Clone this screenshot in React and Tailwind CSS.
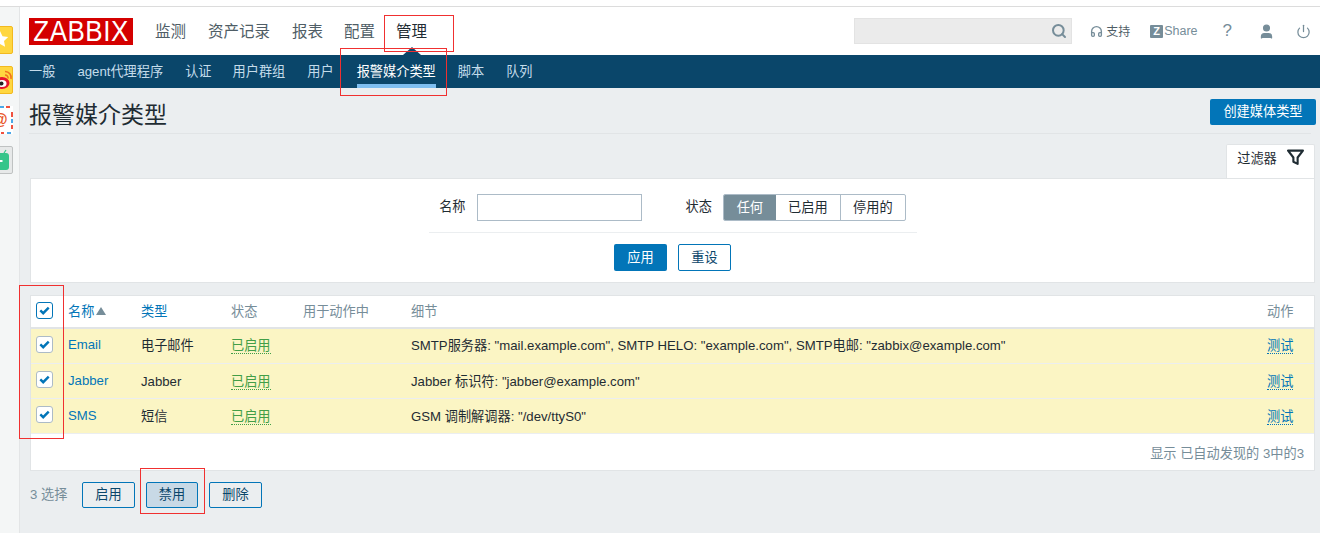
import React from "react";
import { Search, Headphones, User, Power } from "lucide-react";

const font = { fontFamily: '"Liberation Sans", Arial, "Noto Sans CJK SC", sans-serif' };

function Check({ dark }) {
  return (
    <span className={`-mt-[3px] ml-[5px] flex h-[17px] w-[17px] items-center justify-center rounded-[3px] border bg-white ${dark ? "border-[#0275b8]" : "border-[#acbbc7]"}`}>
      <svg width="11" height="9" viewBox="0 0 11 9"><path d="M1.300 4.400 4.200 7.200 9.700 1.600" fill="none" stroke="#0275b8" strokeWidth="2.400" /></svg>
    </span>
  );
}

function Row({ name, type, detail, late }) {
  return (
    <div className="flex h-[35px] items-center border-b border-[#ebeef0] bg-[#fbf5c4] text-[13.2px] text-[#1f2c33]">
      <div className="flex w-[37px]"><Check /></div>
      <div className={`w-[73px] text-[#0275b8] ${late ? "-mt-[1px]" : "-mt-[3px]"}`}>{name}</div>
      <div className={`w-[90px] ${late ? "mt-[1px]" : "-mt-[1px]"}`}>{type}</div>
      <div className={`w-[180px] ${late ? "mt-[2px]" : ""}`}><span className="border-b border-dotted border-[#429e47] text-[#429e47]">已启用</span></div>
      <div className={`flex-1 ${late ? "mt-[1px]" : "-mt-[1px]"}`}>{detail}</div>
      <div className={`w-[47px] ${late ? "mt-[2px]" : ""}`}><span className="border-b border-dotted border-[#0275b8] text-[#0275b8]">测试</span></div>
    </div>
  );
}

function SmallBtn({ children, active, w }) {
  return <button className={`h-[26px] ${w} rounded-[2px] border border-[#0275b8] text-[13.2px] text-[#0a466a] ${active ? "bg-[#c8d9e6]" : "bg-[#ebeef0]"}`}>{children}</button>;
}

function SideIcons() {
  return (
    <div className="flex w-[20px] shrink-0 flex-col border-r border-[#e3e5e6] bg-[#f4f6f6] pt-[19px]">
      <svg width="13" height="28" viewBox="0 0 13 28" className="mb-[12px]" aria-hidden="true">
        <rect x="-3" y="0.500" width="15.500" height="27" rx="1.500" fill="#ffd740" stroke="#f2b91f" />
        <path d="M0 5l2.500 5.300 5.700.7-4.200 4 1.100 5.700L0 18l-5 2.700 1-5.700-4-4 5.600-.7z" fill="#fff" />
      </svg>
      <svg width="13" height="28" viewBox="0 0 13 28" className="mb-[12px]" aria-hidden="true">
        <rect x="-3" y="0.500" width="15.500" height="27" rx="1.500" fill="#ffd740" stroke="#f2b91f" />
        <ellipse cx="2" cy="17" rx="7.500" ry="6" fill="#e6162d" />
        <ellipse cx="2" cy="17.500" rx="4.500" ry="3.500" fill="#fff" />
        <circle cx="1.500" cy="17.500" r="2" fill="#222" />
        <path d="M5 5.500a6 6 0 0 1 6 7.500M5 9a3 3 0 0 1 3 3.500" fill="none" stroke="#f0741f" strokeWidth="1.600" />
      </svg>
      <svg width="13" height="28" viewBox="0 0 13 28" className="mb-[12px]" aria-hidden="true">
        <rect x="0" y="0" width="13" height="28" fill="#fff" />
        <path d="M0 1h4" stroke="#4aa8e8" strokeWidth="2" />
        <path d="M6 1h4M12 6v5M12 19v4M1 27h3" stroke="#f0513f" strokeWidth="2" />
        <path d="M12 13v4M7 27h4" stroke="#4aa8e8" strokeWidth="2" />
        <text x="-8" y="19" fontSize="16" fontWeight="700" fill="#e9572a" fontFamily="Liberation Sans, sans-serif">@</text>
      </svg>
      <svg width="13" height="28" viewBox="0 0 13 28" aria-hidden="true">
        <rect x="-3" y="0.500" width="15.500" height="27" rx="1.500" fill="#e7e9e9" stroke="#bfc2c2" />
        <rect x="-4" y="7" width="13" height="17" rx="3" fill="#35c58a" />
        <path d="M4 7l2-3" stroke="#35c58a" strokeWidth="1.200" />
        <rect x="0" y="14" width="2.500" height="2" fill="#fff" />
      </svg>
    </div>
  );
}

export default function App() {
  return (
    <div style={font} className="relative h-[533px] w-[1320px] overflow-hidden bg-white">
      <div className="h-[7px] border-b border-[#dcdcdc] bg-white" />
      <div className="flex h-[526px]">
        <SideIcons />
        <main className="min-w-0 flex-1 bg-[#ebeef0]">
          <header className="flex h-[48px] items-center bg-white pl-[9px] pr-[9px]">
            <div className="flex h-[27px] w-[104px] items-center justify-center bg-[#d40000] text-[26px] leading-none tracking-[0.5px] text-white">
              <span className="inline-block scale-y-110">ZABBIX</span>
            </div>
            <nav className="ml-[22px] flex items-center pt-[2px] text-[15.500px] text-[#4f5d66]">
              <span className="mr-[22px]">监测</span>
              <span className="mr-[22px]">资产记录</span>
              <span className="mr-[21px]">报表</span>
              <span className="mr-[21px]">配置</span>
              <span className="text-[#1f2c33]">管理</span>
            </nav>
            <div className="ml-auto flex h-[26px] w-[218px] items-center justify-end border border-[#e3e3e3] bg-[#ebebeb] pr-[4px]">
              <Search size={16} strokeWidth={3} className="text-[#768d99]" />
            </div>
            <div className="ml-[18px] flex w-[40px] items-center whitespace-nowrap text-[12px] text-[#4f5d66]">
              <Headphones size={13} strokeWidth={2.500} className="mr-[3px] shrink-0 text-[#768d99]" /><span className="mt-[1px]">支持</span>
            </div>
            <div className="ml-[20px] flex items-center text-[12.500px] text-[#768d99]">
              <span className="mr-[1px] flex h-[13px] w-[13px] items-center justify-center rounded-[1px] bg-[#768d99] text-[11px] font-bold leading-none text-white">Z</span>Share
            </div>
            <span className="ml-[25px] text-[17px] text-[#768d99]">?</span>
            <User size={17} fill="#768d99" strokeWidth={2} className="ml-[26px] text-[#768d99]" />
            <Power size={15} strokeWidth={2} className="ml-[21px] text-[#768d99]" />
          </header>

          <nav className="relative flex h-[33px] items-center bg-[#0a466a] pl-[9px] text-[13.200px] text-[#c4dcea]">
            <span className="mr-[22px]">一般</span>
            <span className="mr-[22px]">agent代理程序</span>
            <span className="mr-[21px]">认证</span>
            <span className="mr-[22px]">用户群组</span>
            <span className="mr-[23px]">用户</span>
            <span className="relative mr-[22px] text-white">报警媒介类型<span className="absolute -bottom-[7px] left-0 h-[4px] w-full bg-[#7ebef0]" /></span>
            <span className="mr-[22px]">脚本</span>
            <span>队列</span>
            <span className="absolute -top-[8px] left-[383px] h-0 w-0 border-x-[9px] border-b-[8px] border-x-transparent border-b-[#0a466a]" />
          </nav>

          <div className="mx-[9px] flex h-[46px] items-start justify-between border-b border-[#e1e4e6]">
            <h1 className="pt-[10px] text-[23px] font-normal text-[#1f2c33]">报警媒介类型</h1>
            <button className="mr-[-5px] mt-[11px] h-[26px] w-[106px] rounded-[2px] bg-[#0275b8] text-[13.200px] text-white">创建媒体类型</button>
          </div>

          <div className="ml-[10px] mr-[5px] mt-[10px] flex justify-end">
            <div className="flex h-[34px] w-[89px] items-start justify-center gap-[10px] rounded-t-[2px] border-x border-t border-[#e1e4e6] bg-white pt-[4px] text-[13.200px] text-[#1f2c33]">
              过滤器
              <svg width="17" height="17" viewBox="0 0 16 16"><path d="M1 1.500h14L10 8v6L6 12V8z" fill="none" stroke="#1f2c33" strokeWidth="2" strokeLinejoin="round" /></svg>
            </div>
          </div>

          <section className="ml-[10px] mr-[5px] h-[105px] border border-[#e1e4e6] bg-white text-[13.200px] text-[#1f2c33]">
            <div className="mx-auto flex h-[54px] w-[488px] items-start justify-center border-b border-[#ebeef0] pt-[15px]">
              <span className="mr-[11px] mt-[3px]">名称</span>
              <input aria-label="名称" className="h-[27px] w-[165px] border border-[#acbbc7] bg-white" />
              <span className="ml-[44px] mr-[11px] mt-[3px]">状态</span>
              <div className="flex h-[27px] overflow-hidden rounded-[2px] border border-[#acbbc7] text-center leading-[25px]">
                <span className="w-[52px] bg-[#768d99] text-white">任何</span>
                <span className="w-[65px] border-r border-[#acbbc7]">已启用</span>
                <span className="w-[64px]">停用的</span>
              </div>
            </div>
            <div className="mt-[11px] flex justify-center gap-[11px]">
              <button className="h-[27px] w-[53px] rounded-[2px] bg-[#0275b8] text-white">应用</button>
              <button className="h-[27px] w-[53px] rounded-[2px] border border-[#0275b8] bg-white text-[#0a466a]">重设</button>
            </div>
          </section>

          <section className="ml-[10px] mr-[5px] mt-[12px] h-[176px] border border-[#e1e4e6] bg-white">
            <div className="flex h-[33px] items-center border-b-2 border-[#e1e4e6] text-[13.200px] text-[#768d99]">
              <div className="flex w-[37px]"><Check dark /></div>
              <div className="flex w-[73px] items-center text-[#0275b8]">名称<span className="ml-[2px] h-0 w-0 border-x-[5px] border-b-[8px] border-x-transparent border-b-[#768d99]" /></div>
              <div className="w-[90px] text-[#0275b8]">类型</div>
              <div className="w-[72px]">状态</div>
              <div className="w-[108px]">用于动作中</div>
              <div className="flex-1">细节</div>
              <div className="w-[47px]">动作</div>
            </div>
            <Row name="Email" type="电子邮件" detail={'SMTP服务器: "mail.example.com", SMTP HELO: "example.com", SMTP电邮: "zabbix@example.com"'} />
            <Row late name="Jabber" type="Jabber" detail={'Jabber 标识符: "jabber@example.com"'} />
            <Row late name="SMS" type="短信" detail={'GSM 调制解调器: "/dev/ttyS0"'} />
            <div className="flex h-[36px] items-center justify-end pr-[10px] pt-[4px] text-[13.200px] text-[#768d99]">显示 已自动发现的 3中的3</div>
          </section>

          <div className="ml-[10px] mt-[11px] flex items-center text-[13.200px] text-[#768d99]">
            <span className="w-[52px]">3 选择</span>
            <SmallBtn w="w-[53px]">启用</SmallBtn>
            <span className="w-[11px]" />
            <SmallBtn w="w-[52px]" active>禁用</SmallBtn>
            <span className="w-[11px]" />
            <SmallBtn w="w-[53px]">删除</SmallBtn>
          </div>
        </main>
      </div>

      <div className="absolute left-[384px] top-[15px] h-[37px] w-[70px] border border-[#f03030]" />
      <div className="absolute left-[340px] top-[48px] h-[48px] w-[107px] border border-[#f03030]" />
      <div className="absolute left-[19px] top-[285px] h-[154px] w-[45px] border border-[#f03030]" />
      <div className="absolute left-[140px] top-[468px] h-[46px] w-[65px] border border-[#f03030]" />
    </div>
  );
}
